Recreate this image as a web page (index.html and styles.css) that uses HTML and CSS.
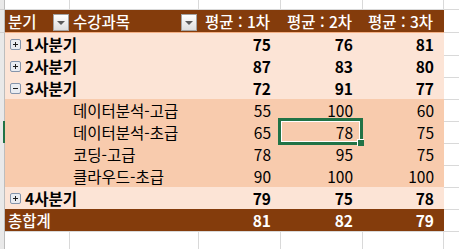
FILE: index.html
```html
<!DOCTYPE html>
<html lang="ko">
<head>
<meta charset="utf-8">
<title>피벗 테이블</title>
<link rel="stylesheet" href="styles.css">
</head>
<body>
<div class="sheet">
  <div class="row top">
    <div class="rh"></div><div class="g"></div><div class="g"></div><div class="g"></div><div class="g"></div><div class="g"></div><div class="gx"></div>
  </div>

  <div class="row head">
    <div class="rh"></div>
    <div class="c hc lab"><span>분기</span><span class="fb"><i></i></span></div>
    <div class="c hc lab lab-b"><span>수강과목</span><span class="fb"><i></i></span></div>
    <div class="c hc num">평균 : 1차</div>
    <div class="c hc num">평균 : 2차</div>
    <div class="c hc num">평균 : 3차</div>
    <div class="gx"></div>
  </div>

  <div class="row pv sub">
    <div class="rh"></div>
    <div class="c span2"><svg class="tg" width="11" height="11" viewBox="0 0 11 11"><rect x=".5" y=".5" width="10" height="10" rx="1.5" fill="#e9ecf1" stroke="#8494ab"/><path d="M3 5.5h5M5.5 3v5" stroke="#1f1f1f"/></svg><span>1사분기</span></div>
    <div class="c num">75</div><div class="c num">76</div><div class="c num">81</div>
    <div class="gx"></div>
  </div>

  <div class="row pv sub">
    <div class="rh"></div>
    <div class="c span2"><svg class="tg" width="11" height="11" viewBox="0 0 11 11"><rect x=".5" y=".5" width="10" height="10" rx="1.5" fill="#e9ecf1" stroke="#8494ab"/><path d="M3 5.5h5M5.5 3v5" stroke="#1f1f1f"/></svg><span>2사분기</span></div>
    <div class="c num">87</div><div class="c num">83</div><div class="c num">80</div>
    <div class="gx"></div>
  </div>

  <div class="row pv sub">
    <div class="rh"></div>
    <div class="c span2"><svg class="tg" width="11" height="11" viewBox="0 0 11 11"><rect x=".5" y=".5" width="10" height="10" rx="1.5" fill="#e9ecf1" stroke="#8494ab"/><path d="M3 5.5h5" stroke="#1f1f1f"/></svg><span>3사분기</span></div>
    <div class="c num">72</div><div class="c num">91</div><div class="c num">77</div>
    <div class="gx"></div>
  </div>

  <div class="row pv det">
    <div class="rh"></div>
    <div class="c"></div>
    <div class="c item">데이터분석-고급</div>
    <div class="c num">55</div><div class="c num">100</div><div class="c num">60</div>
    <div class="gx"></div>
  </div>

  <div class="row pv det">
    <div class="rh on"></div>
    <div class="c"></div>
    <div class="c item">데이터분석-초급</div>
    <div class="c num">65</div>
    <div class="c num selcell">78<span class="selbox"></span><span class="handle"></span></div>
    <div class="c num">75</div>
    <div class="gx"></div>
  </div>

  <div class="row pv det">
    <div class="rh"></div>
    <div class="c"></div>
    <div class="c item">코딩-고급</div>
    <div class="c num">78</div><div class="c num">95</div><div class="c num">75</div>
    <div class="gx"></div>
  </div>

  <div class="row pv det last">
    <div class="rh"></div>
    <div class="c"></div>
    <div class="c item">클라우드-초급</div>
    <div class="c num">90</div><div class="c num">100</div><div class="c num">100</div>
    <div class="gx"></div>
  </div>

  <div class="row pv sub">
    <div class="rh"></div>
    <div class="c span2"><svg class="tg" width="11" height="11" viewBox="0 0 11 11"><rect x=".5" y=".5" width="10" height="10" rx="1.5" fill="#e9ecf1" stroke="#8494ab"/><path d="M3 5.5h5M5.5 3v5" stroke="#1f1f1f"/></svg><span>4사분기</span></div>
    <div class="c num">79</div><div class="c num">75</div><div class="c num">78</div>
    <div class="gx"></div>
  </div>

  <div class="row pv tot">
    <div class="rh"></div>
    <div class="c span2 totlab">총합계</div>
    <div class="c num">81</div><div class="c num">82</div><div class="c num">79</div>
    <div class="gx"></div>
  </div>

  <div class="row blank">
    <div class="rh"></div><div class="g"></div><div class="g"></div><div class="g"></div><div class="g"></div><div class="g"></div><div class="gx"></div>
  </div>
</div>
</body>
</html>
```

FILE: styles.css
```css
* { box-sizing: border-box; }

html, body {
  margin: 0;
  padding: 0;
  background: #ffffff;
  overflow: hidden;
}

body {
  font-family: "Noto Sans CJK KR", "Malgun Gothic", "Noto Sans", sans-serif;
  font-size: 15.5px;
  color: #000000;
}

.sheet {
  display: flex;
  flex-direction: column;
}

.row {
  display: grid;
  grid-template-columns: 5px 65px 129px 82px 82px 81px 1fr;
}

.top { height: 10px; }
.head { height: 23px; }
.pv { height: 22px; }
.blank { height: 22px; }

.rh {
  background: #e9e9e9;
  border-right: 1px solid #bdbdbd;
  border-bottom: 1px solid #d0d0d0;
}

.rh.on {
  border-right: 2px solid #217346;
}

.g {
  border-right: 1px solid #d9d9d9;
  border-bottom: 1px solid #d9d9d9;
}

.gx {
  border-bottom: 1px solid #d9d9d9;
}

.c {
  line-height: 22px;
  white-space: nowrap;
  overflow: visible;
}

.num {
  text-align: right;
  padding-right: 10px;
}

/* header */
.hc {
  background: #843c0c;
  color: #ffffff;
  font-weight: 500;
  border-bottom: 1px solid #f4b084;
}

.hc.num { padding-right: 11px; }

.lab {
  display: flex;
  justify-content: space-between;
  align-items: flex-start;
  padding-left: 3px;
  padding-right: 1px;
}

.lab-b { padding-right: 2px; }

.fb {
  width: 16px;
  height: 17px;
  margin-top: 4px;
  border: 1px solid #a3a3a3;
  background: linear-gradient(#ffffff, #dedede);
  display: flex;
  align-items: center;
  justify-content: center;
}

.fb i {
  width: 0;
  height: 0;
  border-left: 4px solid transparent;
  border-right: 4px solid transparent;
  border-top: 4px solid #5b5b5b;
  margin-top: 1px;
}

/* subtotal rows */
.sub .c {
  background: #fce4d6;
  border-bottom: 1px solid #f4b084;
  font-weight: 700;
}

.span2 {
  grid-column: span 2;
}

.sub .span2 {
  display: flex;
  align-items: center;
  padding-left: 5px;
  gap: 4px;
}

.tg {
  display: block;
  flex: none;
}

/* detail rows */
.det .c {
  background: #f8cbad;
  border-bottom: 1px solid #fbe1d1;
}

.det.last .c {
  border-bottom-color: #f4b084;
}

.item {
  padding-left: 3px;
}

/* grand total */
.tot .c {
  background: #843c0c;
  color: #ffffff;
  font-weight: 700;
  border-bottom: 1px solid #d9d9d9;
}

.totlab {
  padding-left: 3px;
  font-weight: 500 !important;
}

/* active cell */
.selcell {
  position: relative;
}

.selbox {
  position: absolute;
  left: -3px;
  top: -3px;
  width: 85px;
  height: 27px;
  border: 3px solid #217346;
  box-shadow: inset 0 0 0 1px #ffffff;
}

.handle {
  position: absolute;
  left: 76px;
  top: 18px;
  width: 7px;
  height: 7px;
  background: #217346;
  border: 1px solid #ffffff;
  border-right: none;
  border-bottom: none;
}
```
